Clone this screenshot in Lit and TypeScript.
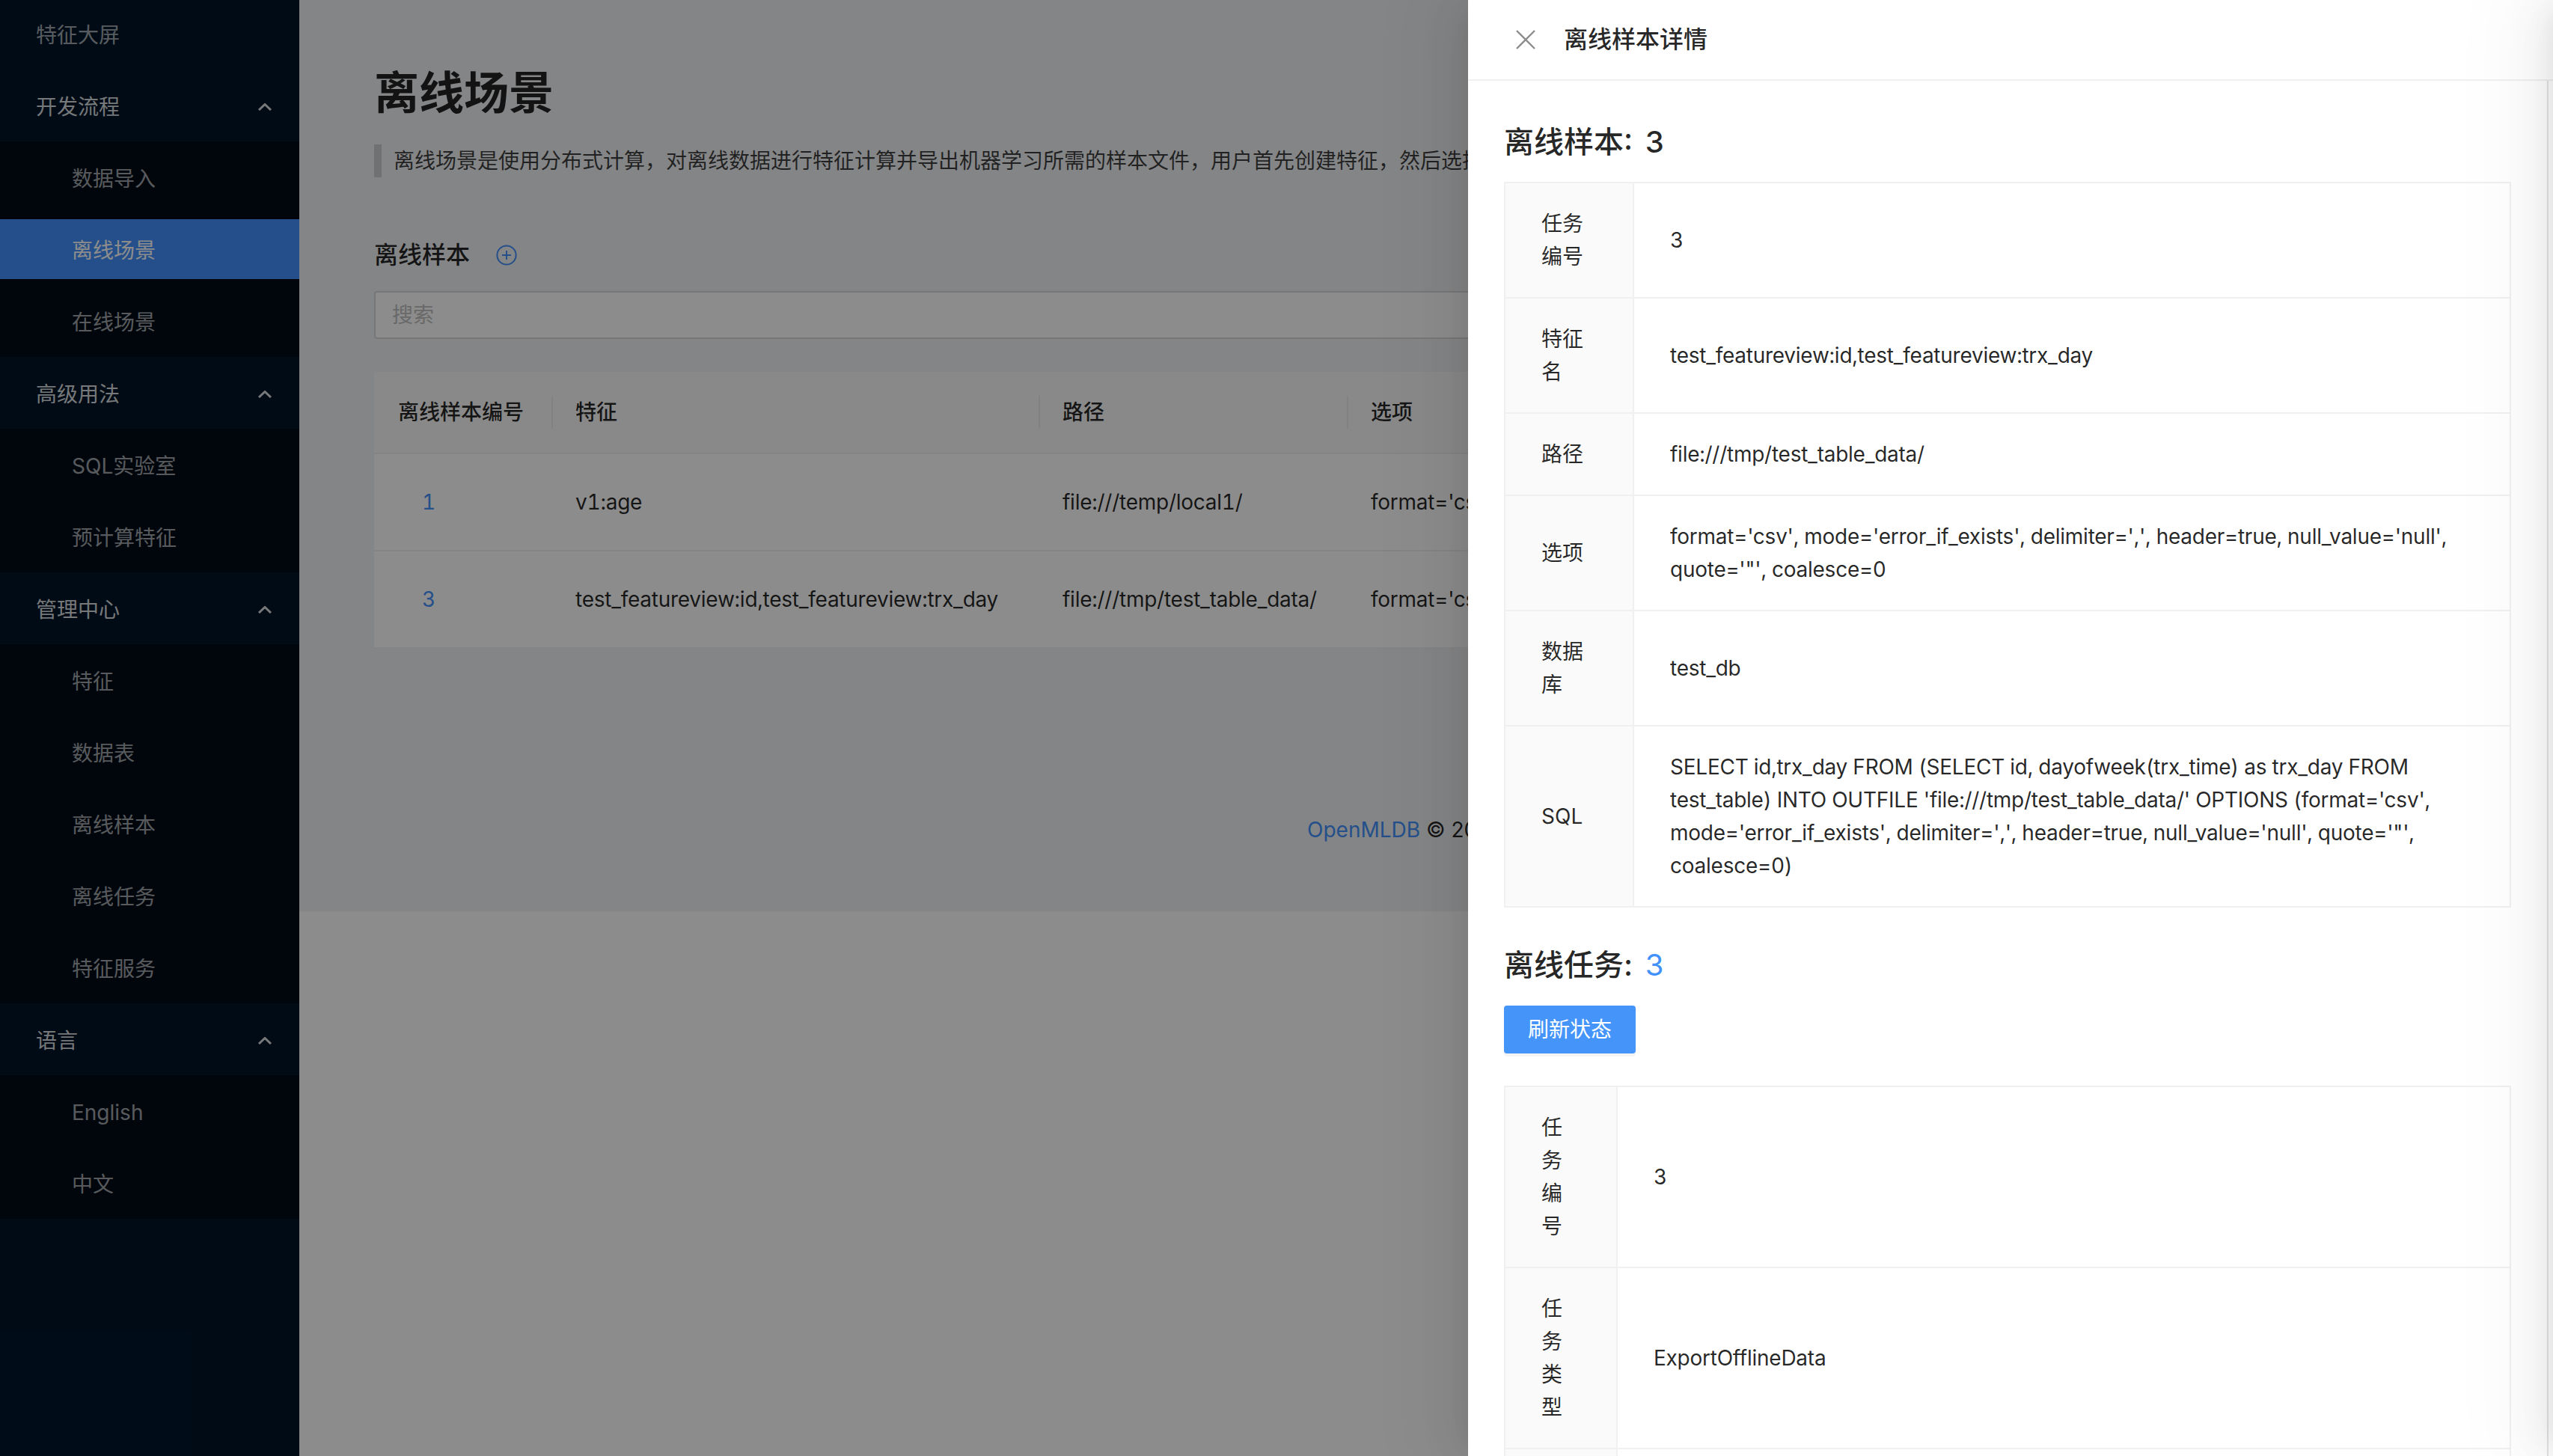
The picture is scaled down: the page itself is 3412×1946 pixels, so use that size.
import { LitElement, html, css, svg } from 'lit';
import { customElement } from 'lit/decorators.js';

const menu = [
  { title: '开发流程', items: [{ t: '数据导入' }, { t: '离线场景', on: true }, { t: '在线场景' }] },
  { title: '高级用法', items: [{ t: 'SQL实验室' }, { t: '预计算特征' }] },
  { title: '管理中心', items: [{ t: '特征' }, { t: '数据表' }, { t: '离线样本' }, { t: '离线任务' }, { t: '特征服务' }] },
  { title: '语言', items: [{ t: 'English' }, { t: '中文' }] },
];

const OPTIONS = `format='csv', mode='error_if_exists', delimiter=',', header=true, null_value='null', quote='"', coalesce=0`;

const samples = [
  { id: '1', feature: 'v1:age', path: 'file:///temp/local1/', options: OPTIONS },
  { id: '3', feature: 'test_featureview:id,test_featureview:trx_day', path: 'file:///tmp/test_table_data/', options: OPTIONS },
];

const sampleRows = [
  ['任务编号', '3'],
  ['特征名', 'test_featureview:id,test_featureview:trx_day'],
  ['路径', 'file:///tmp/test_table_data/'],
  ['选项', OPTIONS],
  ['数据库', 'test_db'],
  ['SQL', `SELECT id,trx_day FROM (SELECT id, dayofweek(trx_time) as trx_day FROM test_table) INTO OUTFILE 'file:///tmp/test_table_data/' OPTIONS (format='csv', mode='error_if_exists', delimiter=',', header=true, null_value='null', quote='"', coalesce=0)`],
];

const jobRows = [
  ['任务编号', '3'],
  ['任务类型', 'ExportOfflineData'],
  ['', ''],
];

const chevron = svg`<path d="M1 9 L9 1.5 L17 9" fill="none" stroke="currentColor" stroke-width="3"/>`;

@customElement('app-root')
export class AppRoot extends LitElement {
  static styles = css`
    :host {
      display: block;
      position: relative;
      height: 100vh;
      overflow: hidden;
      background: #fff;
      font-family: "Inter", "Noto Sans CJK SC", sans-serif;
      font-size: 28px;
      line-height: 44px;
      color: rgba(0, 0, 0, 0.85);
    }
    .layout {
      display: flex;
      height: 100%;
    }

    /* sidebar */
    .side {
      width: 400px;
      flex: none;
      background: #001529;
      padding-top: 5px;
      box-sizing: border-box;
    }
    .item,
    .sub-title {
      height: 80px;
      box-sizing: border-box;
      display: flex;
      align-items: center;
      justify-content: space-between;
      padding: 3px 37px 0 48px;
      color: rgba(255, 255, 255, 0.65);
    }
    .item {
      margin: 8px 0;
    }
    .side > .item {
      margin: 0 0 16px;
    }
    .sub-title {
      margin: 8px 0;
      color: rgba(255, 255, 255, 0.85);
    }
    .sub-title svg {
      width: 18px;
      height: 10px;
      color: rgba(255, 255, 255, 0.85);
    }
    .sub-items {
      background: #000c17;
      padding: 8px 0;
    }
    .sub-items .item {
      padding-left: 96px;
      margin: 0 0 16px;
    }
    .sub-items .item:last-child {
      margin-bottom: 0;
    }
    .item.on {
      background: #4291fb;
      color: #fff;
    }

    /* page content, the drawer covers everything right of x=1962 */
    .main {
      flex: 1;
      min-width: 0;
    }
    .content {
      width: 1562px;
      height: 1218px;
      box-sizing: border-box;
      padding: 82px 0 0 100px;
      overflow: hidden;
    }
    .main {
      background: linear-gradient(#f0f2f5, #f0f2f5) no-repeat top / 100% 1218px;
    }
    h1 {
      margin: 0;
      font-size: 60px;
      line-height: 84px;
      font-weight: 600;
    }
    .intro {
      margin: 27px 0 0;
      height: 44px;
      padding-left: 16px;
      border-left: 10px solid rgba(0, 0, 0, 0.15);
      color: rgba(0, 0, 0, 0.75);
      white-space: nowrap;
      overflow: hidden;
    }
    .section {
      display: flex;
      align-items: center;
      gap: 35px;
      margin-top: 81px;
      font-size: 32px;
      line-height: 45px;
      font-weight: 500;
    }
    .section svg {
      width: 28px;
      height: 28px;
      color: #4291fb;
    }
    .search {
      margin-top: 26px;
      height: 64px;
      box-sizing: border-box;
      border: 2px solid #d9d9d9;
      border-right: 0;
      border-radius: 4px 0 0 4px;
      background: #fff;
      padding: 8px 22px;
      color: #bfbfbf;
    }
    .samples {
      margin-top: 44px;
      background: #fff;
    }
    .tr {
      display: grid;
      grid-template-columns: 237px 651px 412px minmax(0, 1fr);
      border-bottom: 2px solid #f0f0f0;
      align-items: center;
      height: 128px;
      white-space: nowrap;
      letter-spacing: -0.25px;
      font-variant-numeric: tabular-nums;
    }
    .tr > div {
      padding: 0 32px;
      overflow: hidden;
    }
    .tr > div:last-child {
      padding-right: 0;
    }
    .tr.head {
      height: 108px;
      background: #fafafa;
      font-weight: 500;
      letter-spacing: 0;
    }
    .tr.head > div {
      position: relative;
    }
    .tr.head > div + div::before {
      content: '';
      position: absolute;
      left: 0;
      top: 0;
      bottom: 0;
      width: 2px;
      background: rgba(0, 0, 0, 0.06);
    }
    .tr > .link {
      padding-left: 64px;
      color: #4291fb;
    }
    .footer {
      padding: 220px 0 0 1247px;
      white-space: nowrap;
      overflow: hidden;
    }
    .footer span {
      color: #4291fb;
    }

    .mask {
      position: absolute;
      inset: 0;
      background: rgba(0, 0, 0, 0.45);
    }

    /* drawer */
    .drawer {
      position: absolute;
      top: 0;
      bottom: 0;
      left: 1962px;
      width: 1450px;
      background: #fff;
      box-shadow: -12px 0 32px -16px rgba(0, 0, 0, 0.08), -18px 0 56px rgba(0, 0, 0, 0.05),
        -24px 0 96px 32px rgba(0, 0, 0, 0.03);
    }
    .drawer.next {
      left: 3412px;
    }
    .drawer-head {
      height: 106px;
      border-bottom: 2px solid #f0f0f0;
      display: flex;
      align-items: center;
      gap: 38px;
      padding-left: 64px;
      font-size: 32px;
      font-weight: 500;
    }
    .drawer-head svg {
      width: 26px;
      height: 26px;
      color: #8c8c8c;
    }
    .drawer-body {
      height: calc(100% - 108px);
      box-sizing: border-box;
      margin-right: 6px;
      border-right: 2px solid #e4e4e4;
      padding: 54px 48px 0;
      overflow: hidden;
    }
    h2 {
      margin: 0 0 25px;
      font-size: 40px;
      line-height: 56px;
      font-weight: 500;
      word-spacing: 6px;
    }
    h2.job {
      margin: 49px 0 26px;
    }
    h2 span {
      color: #4291fb;
      font-weight: 400;
    }
    .refresh {
      display: block;
      width: 176px;
      height: 64px;
      margin-bottom: 43px;
      padding: 0;
      border: 0;
      border-radius: 4px;
      background: #4494f9;
      color: #fff;
      font: inherit;
      box-shadow: 0 4px 0 rgba(0, 0, 0, 0.045);
    }
    table {
      width: 100%;
      table-layout: fixed;
      border-collapse: collapse;
      border: 2px solid #f0f0f0;
    }
    td,
    th {
      border: 2px solid #f0f0f0;
      padding: 32px 48px;
      text-align: left;
      font-weight: 400;
      word-break: break-word;
    }
    td {
      letter-spacing: -0.25px;
      font-variant-numeric: tabular-nums;
    }
    th {
      width: 74px;
      background: #fafafa;
      line-break: anywhere;
    }
    table.narrow th {
      width: 52px;
    }
  `;

  private renderTable(rows: string[][], cls = '') {
    return html`<table class=${cls}>
      ${rows.map(([k, v]) => html`<tr><th>${k || '\u00a0'}</th><td>${v || '\u00a0'}</td></tr>`)}
    </table>`;
  }

  render() {
    return html`
      <div class="layout">
        <aside class="side">
          <div class="item">特征大屏</div>
          ${menu.map(
            (m) => html`
              <div class="sub-title">
                ${m.title}
                <svg viewBox="0 0 18 10">${chevron}</svg>
              </div>
              <div class="sub-items">
                ${m.items.map((i) => html`<div class="item ${i.on ? 'on' : ''}">${i.t}</div>`)}
              </div>
            `
          )}
        </aside>
        <div class="main">
          <div class="content">
            <h1>离线场景</h1>
            <div class="intro">
              离线场景是使用分布式计算，对离线数据进行特征计算并导出机器学习所需的样本文件，用户首先创建特征，然后选择特征并导出样本文件用于模型训练。
            </div>
            <div class="section">
              离线样本
              <svg viewBox="0 0 28 28" fill="none" stroke="currentColor" stroke-width="2">
                <circle cx="14" cy="14" r="12.6" />
                <path d="M14 8 V20 M8 14 H20" />
              </svg>
            </div>
            <div class="search">搜索</div>
            <div class="samples">
              <div class="tr head">
                <div>离线样本编号</div>
                <div>特征</div>
                <div>路径</div>
                <div>选项</div>
              </div>
              ${samples.map(
                (s) => html`<div class="tr">
                  <div class="link">${s.id}</div>
                  <div>${s.feature}</div>
                  <div>${s.path}</div>
                  <div>${s.options}</div>
                </div>`
              )}
            </div>
            <div class="footer"><span>OpenMLDB</span> © 2022</div>
          </div>
        </div>
      </div>
      <div class="mask"></div>
      <div class="drawer">
        <div class="drawer-head">
          <svg viewBox="0 0 26 26" fill="none" stroke="currentColor" stroke-width="2.4">
            <path d="M1 1 L25 25 M25 1 L1 25" />
          </svg>
          离线样本详情
        </div>
        <div class="drawer-body">
          <h2>离线样本: 3</h2>
          ${this.renderTable(sampleRows)}
          <h2 class="job">离线任务: <span>3</span></h2>
          <button class="refresh">刷新状态</button>
          ${this.renderTable(jobRows, 'narrow')}
        </div>
      </div>
      <div class="drawer next"></div>
    `;
  }
}
